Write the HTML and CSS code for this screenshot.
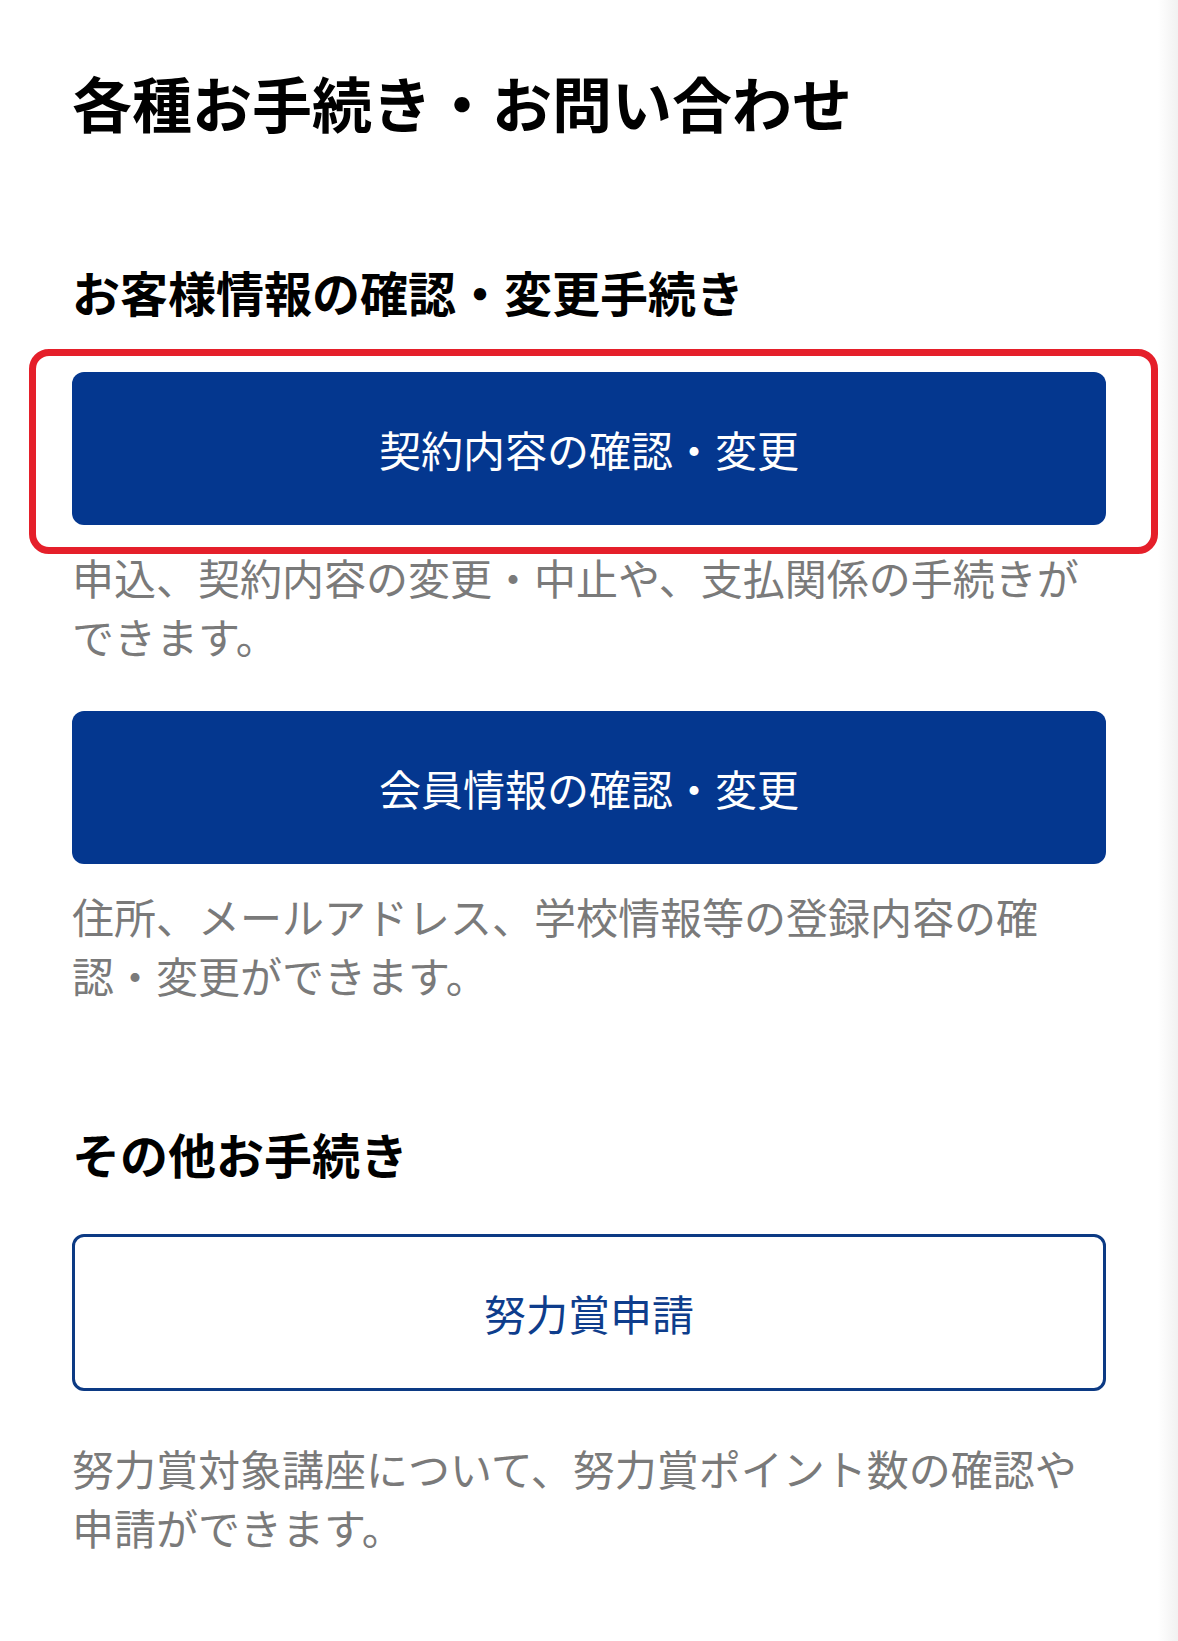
FILE: index.html
```html
<!DOCTYPE html>
<html lang="ja">
<head>
    <meta charset="UTF-8">
    <meta name="viewport" content="width=device-width, initial-scale=1.0">
    <title>各種お手続き・お問い合わせ</title>
    <link rel="stylesheet" href="styles.css">
</head>
<body>
    <div class="page">
        <h1 class="page-title">各種お手続き・お問い合わせ</h1>

        <section class="section">
            <h2 class="section-title">お客様情報の確認・変更手続き</h2>
            <div class="item">
                <div class="highlight">
                    <a class="btn btn-primary" href="#">契約内容の確認・変更</a>
                </div>
                <p class="item-desc">申込、契約内容の変更・中止や、支払関係の手続きができます。</p>
            </div>
            <div class="item">
                <a class="btn btn-primary" href="#">会員情報の確認・変更</a>
                <p class="item-desc">住所、メールアドレス、学校情報等の登録内容の確認・変更ができます。</p>
            </div>
        </section>

        <section class="section">
            <h2 class="section-title">その他お手続き</h2>
            <div class="item item-other">
                <a class="btn btn-outline" href="#">努力賞申請</a>
                <p class="item-desc">努力賞対象講座について、努力賞ポイント数の確認や申請ができます。</p>
            </div>
        </section>
    </div>
</body>
</html>
```

FILE: styles.css
```css
body {
    margin: 0;
    background: linear-gradient(to right, #fff calc(100% - 20px), #f1f1f1 100%);
    color: #000;
    font-family: "Noto Sans CJK JP", "Noto Sans", sans-serif;
}
.page {
    padding: 60px 72px 80px 72px;
}
.page-title {
    font-size: 60px;
    font-weight: 700;
    line-height: 84px;
    margin: 0;
}
.section {
    margin-top: 114px;
}
.section + .section {
    margin-top: 116px;
}
.section-title {
    font-size: 48px;
    font-weight: 700;
    line-height: 67px;
    margin: 0 0 47px 0;
}
.item + .item {
    margin-top: 46px;
}
.highlight {
    position: relative;
}
.highlight::after {
    content: "";
    position: absolute;
    top: -23px;
    left: -43px;
    right: -52px;
    bottom: -29px;
    border: 7px solid #e51f2a;
    border-radius: 20px;
    pointer-events: none;
}
.btn {
    display: block;
    box-sizing: border-box;
    text-align: center;
    text-decoration: none;
    font-size: 42px;
    line-height: 59px;
    padding: 47px 20px;
    border-radius: 12px;
}
.btn-primary {
    background: #04378f;
    color: #fff;
}
.btn-outline {
    background: #fff;
    color: #0e3d8c;
    border: 3px solid #0c3a84;
    padding: 46px 20px;
}
.item-desc {
    margin: 22px 0 0 0;
    font-size: 42px;
    line-height: 59px;
    color: #7a7a7a;
}
.item-other .item-desc {
    margin-top: 47px;
}
```
